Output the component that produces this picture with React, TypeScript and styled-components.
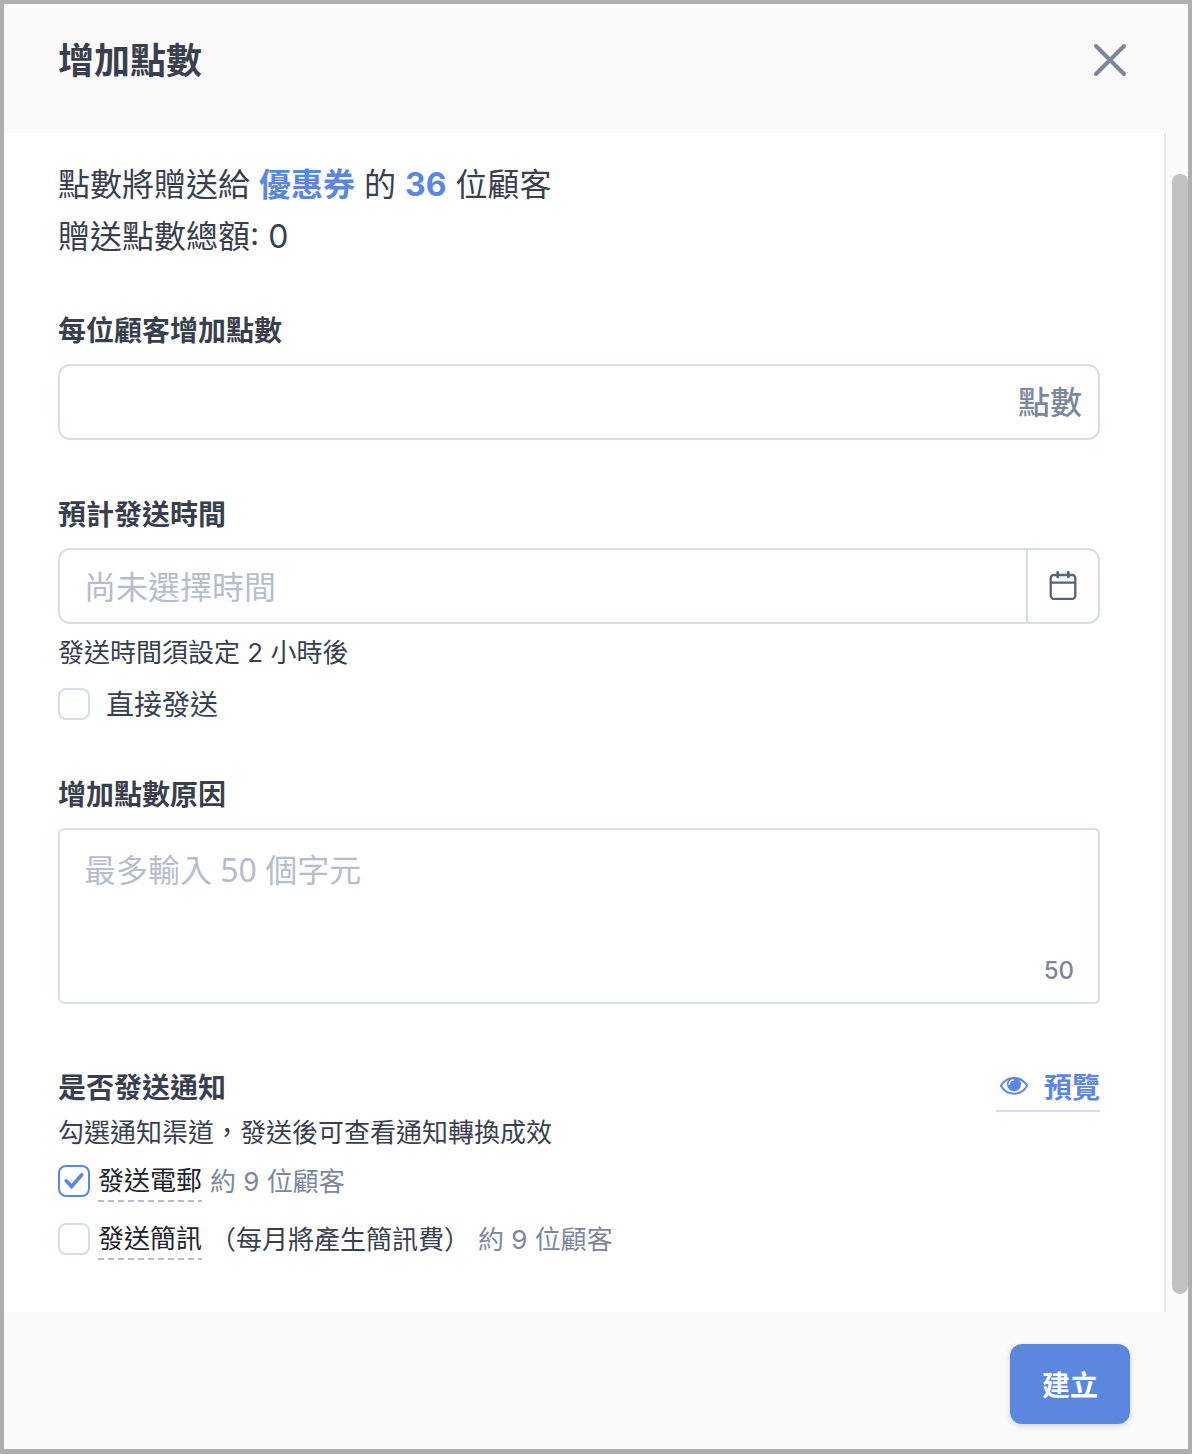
import React, { useState } from "react";
import styled, { createGlobalStyle } from "styled-components";

const color = {
  backdrop: "#afafaf",
  surface: "#fafafa",
  text: "#393f4f",
  strong: "#20232c",
  muted: "#7d879c",
  placeholder: "#b6bdcc",
  line: "#d3dfe8",
  primary: "#5c87df",
};

const GlobalStyle = createGlobalStyle`
  *, *::before, *::after { box-sizing: border-box; }
  body {
    margin: 0;
    background: ${color.backdrop};
    color: ${color.text};
    font-family: Inter, "Noto Sans CJK TC", sans-serif;
  }
  input, textarea, button { font: inherit; color: inherit; }
`;

const Backdrop = styled.div`
  display: grid;
  min-height: 100vh;
  padding: 4px 4px 5px;
`;

const Dialog = styled.form`
  display: flex;
  flex-direction: column;
  background: ${color.surface};
`;

const Header = styled.header`
  display: flex;
  align-items: flex-start;
  justify-content: space-between;
  padding: 32px 60px 47px 54px;
`;

const Title = styled.h1`
  margin: 0;
  font-size: 36px;
  font-weight: 700;
  line-height: 50px;
`;

const CloseButton = styled.button`
  display: flex;
  padding: 6px 0;
  border: 0;
  background: none;
  color: ${color.muted};
  cursor: pointer;
`;

const Scroller = styled.div`
  display: flex;
  flex: 1;
`;

const Content = styled.main`
  flex: 1;
  min-width: 0;
  padding: 26px 64px 52px 54px;
  background: #fff;
`;

const Track = styled.div`
  display: flex;
  width: 24px;
  padding: 41px 0 18px 6px;
  border-left: 2px solid #e8e8e8;
`;

const Thumb = styled.div`
  flex: 1;
  border-radius: 8px;
  background: #c1c1c1;
`;

const Summary = styled.p`
  margin: 0 0 47px;
  font-size: 32px;
  line-height: 52px;
`;

const Highlight = styled.strong`
  color: ${color.primary};
  font-weight: 700;
`;

const Field = styled.section<{ $after?: number }>`
  margin-bottom: ${(p) => p.$after ?? 54}px;
`;

const FieldLabel = styled.label`
  display: block;
  margin-bottom: 12px;
  font-size: 28px;
  font-weight: 600;
  line-height: 42px;
`;

const InputBox = styled.div`
  display: flex;
  height: 76px;
  border: 2px solid ${color.line};
  border-radius: 12px;
  background: #fff;
  overflow: hidden;
`;

const TextInput = styled.input`
  flex: 1;
  min-width: 0;
  padding: 2px 24px 0;
  border: 0;
  outline: 0;
  background: none;
  font-size: 32px;
  &::placeholder { color: ${color.placeholder}; opacity: 1; }
`;

const Suffix = styled.span`
  padding: 2px 16px 0;
  color: ${color.muted};
  font-size: 32px;
  font-weight: 500;
  line-height: 70px;
`;

const CalendarButton = styled.button`
  display: flex;
  align-items: center;
  justify-content: center;
  width: 72px;
  padding: 0;
  border: 0;
  border-left: 2px solid ${color.line};
  background: none;
  color: #58617d;
  cursor: pointer;
`;

const Hint = styled.p<{ $gapTop?: number; $gapBottom: number }>`
  margin: ${(p) => p.$gapTop ?? 0}px 0 ${(p) => p.$gapBottom}px;
  font-size: 26px;
  line-height: 42px;
`;

const CheckLine = styled.div<{ $gap: number }>`
  display: flex;
  align-items: center;
  gap: ${(p) => p.$gap}px;
`;

const CheckFrame = styled.span`
  display: grid;
  flex: none;
  width: 32px;
  height: 32px;
  & > * { grid-area: 1 / 1; }
  & > svg { visibility: hidden; pointer-events: none; color: ${color.primary}; }
  & > input:checked + svg { visibility: visible; }
`;

const CheckInput = styled.input`
  appearance: none;
  width: 32px;
  height: 32px;
  margin: 0;
  border: 2px solid ${color.line};
  border-radius: 8px;
  background: #fff;
  cursor: pointer;
  &:checked { border-color: ${color.primary}; }
`;

const CheckLabel = styled.label`
  padding-top: 2px;
  font-size: 28px;
  line-height: 30px;
`;

const AreaBox = styled.div`
  display: flex;
  flex-direction: column;
  gap: 14px;
  padding: 16px 24px;
  border: 2px solid ${color.line};
  border-radius: 6px;
  background: #fff;
`;

const TextArea = styled.textarea`
  display: block;
  width: 100%;
  padding: 0;
  border: 0;
  outline: 0;
  resize: none;
  background: none;
  font-family: "Noto Sans", "Noto Sans CJK TC", sans-serif;
  font-size: 32px;
  line-height: 48px;
  &::placeholder { color: ${color.placeholder}; opacity: 1; }
`;

const Counter = styled.output`
  align-self: flex-end;
  color: ${color.muted};
  font-size: 24px;
  font-weight: 500;
  line-height: 30px;
`;

const NotifyHeader = styled.div`
  display: flex;
  align-items: flex-start;
  justify-content: space-between;
`;

const NotifyTitle = styled.h2`
  margin: 0;
  font-size: 28px;
  font-weight: 600;
  line-height: 44px;
`;

const PreviewLink = styled.a`
  display: flex;
  align-items: center;
  gap: 12px;
  border-bottom: 2px solid #cfdcf6;
  color: ${color.primary};
  font-size: 28px;
  font-weight: 700;
  line-height: 44px;
  text-decoration: none;
`;

const Channels = styled.div`
  display: flex;
  flex-direction: column;
  gap: 16px;
  font-size: 26px;
  line-height: 40px;
`;

const ChannelLabel = styled.label`
  background: repeating-linear-gradient(90deg, ${color.placeholder} 0 6px, transparent 6px 10px) left bottom / 100% 2px no-repeat;
  color: ${color.strong};
  line-height: 42px;
  cursor: pointer;
`;

const ChannelNote = styled.span`
  padding-top: 2px;
`;

const Reach = styled(ChannelNote)`
  color: ${color.muted};
`;

const Footer = styled.footer`
  display: flex;
  justify-content: flex-end;
  padding: 32px 58px 25px;
`;

const SubmitButton = styled.button`
  padding: 22px 32px 18px;
  border: 0;
  border-radius: 12px;
  background: ${color.primary};
  box-shadow: 0 2px 6px rgba(0, 0, 0, 0.16);
  color: #fff;
  font-size: 28px;
  font-weight: 700;
  line-height: 40px;
  cursor: pointer;
`;

function CheckBox({ id, initial = false }: { id: string; initial?: boolean }) {
  const [checked, setChecked] = useState(initial);
  return (
    <CheckFrame>
      <CheckInput id={id} type="checkbox" checked={checked} onChange={(e) => setChecked(e.target.checked)} />
      <svg width="32" height="32" viewBox="0 0 32 32" fill="none" stroke="currentColor" strokeWidth="3.6" aria-hidden="true">
        <path d="M8.200 15.800l5.400 5.700L23.800 9.800" strokeLinecap="round" />
      </svg>
    </CheckFrame>
  );
}

const LIMIT = 50;

export default function App() {
  const [reason, setReason] = useState("");
  return (
    <>
      <GlobalStyle />
      <Backdrop>
        <Dialog role="dialog" aria-labelledby="dialog-title" onSubmit={(e) => e.preventDefault()}>
          <Header>
            <Title id="dialog-title">增加點數</Title>
            <CloseButton type="button" aria-label="關閉">
              <svg width="36" height="36" viewBox="0 0 36 36" fill="none" stroke="currentColor" strokeWidth="4" strokeLinecap="round">
                <path d="M4 4l28 28M32 4L4 32" />
              </svg>
            </CloseButton>
          </Header>

          <Scroller>
            <Content>
              <Summary>
                點數將贈送給 <Highlight>優惠券</Highlight> 的 <Highlight>36</Highlight> 位顧客
                <br />
                贈送點數總額: 0
              </Summary>

              <Field>
                <FieldLabel htmlFor="points">每位顧客增加點數</FieldLabel>
                <InputBox>
                  <TextInput id="points" inputMode="numeric" />
                  <Suffix>點數</Suffix>
                </InputBox>
              </Field>

              <Field>
                <FieldLabel htmlFor="send-time">預計發送時間</FieldLabel>
                <InputBox>
                  <TextInput id="send-time" placeholder="尚未選擇時間" />
                  <CalendarButton type="button" aria-label="選擇時間">
                    <svg width="32" height="32" viewBox="0 0 32 32" fill="none" stroke="currentColor" strokeWidth="2.3">
                      <rect x="3.7" y="5" width="24.6" height="23.800" rx="3" />
                      <path d="M4 12.700h24.600" />
                      <path d="M10.700 2.300v4.600M21.300 2.300v4.600" strokeWidth="2.800" strokeLinecap="round" />
                    </svg>
                  </CalendarButton>
                </InputBox>
                <Hint $gapTop={8} $gapBottom={14}>發送時間須設定 2 小時後</Hint>
                <CheckLine $gap={16}>
                  <CheckBox id="send-now" />
                  <CheckLabel htmlFor="send-now">直接發送</CheckLabel>
                </CheckLine>
              </Field>

              <Field $after={62}>
                <FieldLabel htmlFor="reason">增加點數原因</FieldLabel>
                <AreaBox>
                  <TextArea
                    id="reason"
                    rows={2}
                    maxLength={LIMIT}
                    placeholder="最多輸入 50 個字元"
                    value={reason}
                    onChange={(e) => setReason(e.target.value)}
                  />
                  <Counter htmlFor="reason">{LIMIT - reason.length}</Counter>
                </AreaBox>
              </Field>

              <Field $after={0}>
                <NotifyHeader>
                  <NotifyTitle>是否發送通知</NotifyTitle>
                  <PreviewLink href="#preview">
                    <svg width="36" height="36" viewBox="0 0 36 36" fill="none" aria-hidden="true">
                      <path d="M4.800 15.800C8 10.700 12.800 8 18 8s10 2.700 13.200 7.800c-3.200 5.200-8 7.900-13.200 7.900S8 21 4.800 15.800z" stroke="currentColor" strokeWidth="2" strokeLinejoin="round" />
                      <circle cx="18" cy="14.300" r="7" fill="currentColor" />
                      <path d="M13.300 14.300a4.300 4.300 0 0 1 4-4.300" stroke="#fff" strokeWidth="1.500" strokeLinecap="round" />
                    </svg>
                    預覽
                  </PreviewLink>
                </NotifyHeader>
                <Hint $gapBottom={6}>勾選通知渠道，發送後可查看通知轉換成效</Hint>
                <Channels>
                  <CheckLine $gap={8}>
                    <CheckBox id="by-mail" initial />
                    <ChannelLabel htmlFor="by-mail">發送電郵</ChannelLabel>
                    <Reach>約 9 位顧客</Reach>
                  </CheckLine>
                  <CheckLine $gap={8}>
                    <CheckBox id="by-sms" />
                    <ChannelLabel htmlFor="by-sms">發送簡訊</ChannelLabel>
                    <ChannelNote>（每月將產生簡訊費）</ChannelNote>
                    <Reach>約 9 位顧客</Reach>
                  </CheckLine>
                </Channels>
              </Field>
            </Content>
            <Track aria-hidden="true">
              <Thumb />
            </Track>
          </Scroller>

          <Footer>
            <SubmitButton type="submit">建立</SubmitButton>
          </Footer>
        </Dialog>
      </Backdrop>
    </>
  );
}
